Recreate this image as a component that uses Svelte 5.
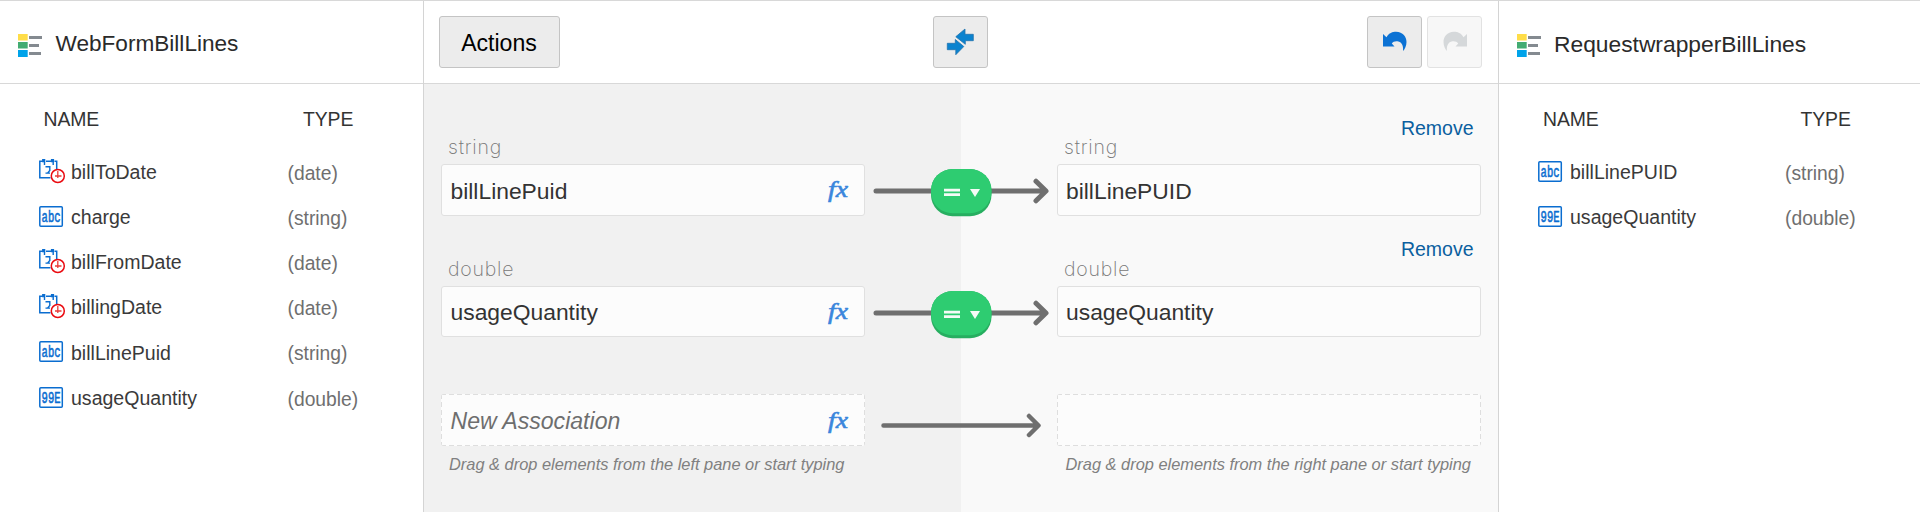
<script>
  const left = {
    title: 'WebFormBillLines',
    rows: [
      ['billToDate', 'date'],
      ['charge', 'string'],
      ['billFromDate', 'date'],
      ['billingDate', 'date'],
      ['billLinePuid', 'string'],
      ['usageQuantity', 'double'],
    ],
  };
  const right = {
    title: 'RequestwrapperBillLines',
    rows: [
      ['billLinePUID', 'string'],
      ['usageQuantity', 'double'],
    ],
  };
  const links = [
    { type: 'string', from: 'billLinePuid', to: 'billLinePUID' },
    { type: 'double', from: 'usageQuantity', to: 'usageQuantity' },
  ];
</script>

{#snippet typeIcon(type)}
  {#if type === 'date'}
    <svg class="ticon" width="27" height="25" viewBox="0 0 27 25">
      <path d="M11.500 18.800H.8V2.200h3M7 2.200h5M15.500 2.200h2.200v8" fill="none" stroke="#0a6dd0" stroke-width="1.500" />
      <path d="M4.700 0v3.200M13.500 0v3.200" stroke="#0a6dd0" stroke-width="3.200" />
      <path d="M5.500 3v3M14.200 3v3" stroke="#0a6dd0" stroke-width="1.400" />
      <path d="M6.500 7.800h4.300v3.600l-2.300 2.700M6.500 14.100h4.500" fill="none" stroke="#0a6dd0" stroke-width="1.400" />
      <circle cx="18.800" cy="17" r="6.500" fill="#fff" stroke="#ea0a10" stroke-width="1.500" />
      <path d="M18.800 12v7M16 17h6.500" stroke="#ea3b38" stroke-width="1.300" />
    </svg>
  {:else}
    <svg class="ticon" width="27" height="25" viewBox="0 0 27 25">
      <rect x=".8" y="2.700" width="22.500" height="19.600" rx="1" fill="#fff" stroke="#0a6dd0" stroke-width="1.500" />
      <text x="2.600" y="18.300" textLength="19" lengthAdjust="spacingAndGlyphs" class="glyphs">{type === 'string' ? 'abc' : '99E'}</text>
    </svg>
  {/if}
{/snippet}

{#snippet panel(data, side)}
  <aside class={side}>
    <header>
      <svg width="25" height="24" viewBox="0 0 25 24">
        <path fill="#ffdd48" d="M0 0h9.700v6.500H0z" />
        <path fill="#43ac72" d="M0 8h9.700v6.500H0z" />
        <path fill="#00a3ea" d="M0 16h9.700v7H0z" />
        <path fill="#848a90" d="M11 2h13v3H11zM11 10h10v3H11zM11 18h12v3H11z" />
      </svg>
      <h2>{data.title}</h2>
    </header>
    <div class="cols"><span>NAME</span><span>TYPE</span></div>
    <ul>
      {#each data.rows as [name, type]}
        <li>
          {@render typeIcon(type)}
          <span class="name">{name}</span>
          <span class="type">({type})</span>
        </li>
      {/each}
    </ul>
  </aside>
{/snippet}

{#snippet fx()}
  <svg width="28" height="26" viewBox="0 0 28 26"><text x="4" y="19" textLength="20" lengthAdjust="spacingAndGlyphs" class="fx">fx</text></svg>
{/snippet}

<div class="app">
  {@render panel(left, 'left')}
  <main>
    <div class="toolbar">
      <button class="actions">Actions</button>
      <button class="sq">
        <svg width="27" height="28" viewBox="0 0 27 28" fill="#0b83cf" stroke="#2273ae" stroke-width=".8">
          <path d="M26.300 6.300v6.400h-8v3.600L8.800 8.700 18 1v5.300z" />
          <path d="M.3 15.300h8V11.500l8.500 7-8 8.200v-5H.3z" />
        </svg>
      </button>
      <div class="pair">
        <button class="sq">
          <svg width="26" height="22" viewBox="0 0 26 22"><path fill="#0c72d4" d="M1 3l3.500 3.200C7 2 10.500 .8 14 .8c7 0 10.500 5.200 10.500 10.200 0 4-1.700 7.200-3.500 9 .5-4-.3-9-5.500-9.800-2.600-.3-4.500 .5-5.700 2.300L12.500 15.500H1z" /></svg>
        </button>
        <button class="sq off">
          <svg width="26" height="22" viewBox="0 0 26 22"><path fill="#d5d8da" transform="matrix(-1 0 0 1 26 0)" d="M1 3l3.500 3.200C7 2 10.500 .8 14 .8c7 0 10.500 5.200 10.500 10.200 0 4-1.700 7.200-3.500 9 .5-4-.3-9-5.500-9.800-2.600-.3-4.500 .5-5.700 2.300L12.500 15.500H1z" /></svg>
        </button>
      </div>
    </div>
    <div class="canvas">
      {#each links as link}
        <section>
          <div class="side">
            <label>{link.type}</label>
            <div class="field">{link.from}{@render fx()}</div>
          </div>
          <div class="link">
            <svg width="191" height="48" viewBox="0 0 191 48">
              <path d="M11 22H180M171 12.200l10 9.800-10 9.800" fill="none" stroke="#6f6f6f" stroke-width="5" stroke-linecap="round" stroke-linejoin="round" />
              <rect x="66" y="0" width="60.500" height="47.200" rx="21.500" fill="#27ae60" />
              <rect x="66" y="0" width="60.500" height="44.200" rx="21.500" fill="#2ecc71" />
              <path fill="#f4fbf6" d="M79 19.800h16v2.800H79zM79 24.300h16v2.800H79zM105 20h10l-5 8z" />
            </svg>
          </div>
          <div class="side">
            <div class="top"><label>{link.type}</label><a href="#remove">Remove</a></div>
            <div class="field">{link.to}</div>
          </div>
        </section>
      {/each}
      <section class="new">
        <div class="side">
          <div class="field dashed"><em>New Association</em>{@render fx()}</div>
          <p>Drag &amp; drop elements from the left pane or start typing</p>
        </div>
        <div class="link">
          <svg width="191" height="48" viewBox="0 0 191 48">
            <path d="M18.500 22.500H172M164 13l9.500 9.500-9.500 9.500" fill="none" stroke="#6f6f6f" stroke-width="4.500" stroke-linecap="round" stroke-linejoin="round" />
          </svg>
        </div>
        <div class="side">
          <div class="field dashed"></div>
          <p class="wide">Drag &amp; drop elements from the right pane or start typing</p>
        </div>
      </section>
    </div>
  </main>
  {@render panel(right, 'right')}
</div>

<style>
  :global(body) { background: #fff; }
  .app {
    display: grid;
    grid-template-columns: 424px 1074px 422px;
    width: 1920px;
    height: 512px;
    overflow: hidden;
    box-sizing: border-box;
    border-top: 1px solid #d8d8d8;
    font-family: "Liberation Sans", Arial, sans-serif;
    color: #333;
  }
  .app * { box-sizing: border-box; }
  svg { display: block; flex: none; overflow: visible; }
  .left { border-right: 1px solid #d4d4d4; }
  .right { border-left: 1px solid #d4d4d4; }
  header {
    display: flex;
    align-items: center;
    height: 83px;
    padding-left: 18px;
    border-bottom: 1px solid #d8d8d8;
  }
  header svg { position: relative; top: 4px; }
  h2 {
    margin: 4px 0 0 12.500px;
    font-size: 22.600px;
    font-weight: 400;
    line-height: 30px;
    color: #2a2a2a;
  }
  .right h2 { margin-left: 12px; font-size: 22.800px; }
  .cols {
    display: flex;
    height: 65px;
    padding: 22px 0 0 43.500px;
    font-size: 19.400px;
    line-height: 26px;
    letter-spacing: -.1px;
  }
  .right .cols { padding-left: 44px; }
  .cols span { width: 259.500px; }
  .right .cols span { width: 257.500px; }
  .cols span:last-child { width: auto; }
  ul { margin: 0; padding: 0 0 0 39px; list-style: none; }
  li { display: flex; height: 45.200px; align-items: center; }
  .ticon { position: relative; top: -.5px; }
  .name { width: 216.500px; margin: .5px 0 0 5px; font-size: 19.550px; line-height: 26px; color: #3a3a3a; }
  .right .name { width: 215px; }
  .type { margin-top: 4px; font-size: 19.300px; line-height: 26px; color: #6f6f6f; }
  .glyphs { font: 400 16px "Liberation Mono", monospace; fill: #0a6dd0; stroke: #0a6dd0; stroke-width: .6px; }
  .fx { font: italic 400 24px "Liberation Serif", serif; fill: #3b86dc; stroke: #3b86dc; stroke-width: .6px; }

  main { display: flex; flex-direction: column; }
  .toolbar {
    display: grid;
    grid-template-columns: 1fr auto 1fr;
    align-items: center;
    height: 83px;
    padding: 0 16px 0 15px;
    border-bottom: 1px solid #d8d8d8;
  }
  button {
    display: flex;
    align-items: center;
    justify-content: center;
    height: 52px;
    padding: 0;
    border: 1px solid #c4c4c4;
    border-radius: 3px;
    background: #ececec;
    font-family: inherit;
    color: #000;
  }
  .actions { width: 121px; font-size: 23.100px; padding: 2px 1px 0 0; }
  .sq { width: 55px; }
  .off { border-color: #e2e2e2; background: #f7f7f7; }
  .pair { display: flex; gap: 5px; justify-content: flex-end; }
  .canvas {
    flex: 1;
    padding: 33px 0 0 17px;
    background: linear-gradient(90deg, #f1f1f1 537px, #f9f9f9 537px);
  }
  section { display: grid; grid-template-columns: 424px 191.500px 424.500px; height: 121.500px; }
  label {
    display: block;
    height: 47px;
    padding: 17px 0 0 7px;
    font-family: Inter, sans-serif;
    font-size: 19.500px;
    font-weight: 200;
    line-height: 26px;
    letter-spacing: .8px;
    color: #777;
  }
  .top { display: flex; justify-content: space-between; height: 47px; }
  .top label { padding-left: 7.500px; }
  a { margin: -2.500px 7.500px 0 0; font-size: 19.500px; line-height: 26px; color: #0b5f9f; text-decoration: none; }
  .field {
    display: flex;
    align-items: center;
    justify-content: space-between;
    height: 51.500px;
    padding: 3px 12px 0 8.500px;
    border: 1px solid #e0e0e0;
    border-radius: 3px;
    background: #fcfcfc;
    font-size: 22.850px;
    white-space: nowrap;
  }
  .link { padding-top: 52px; }
  .new .link { padding-top: 9px; }
  .dashed {
    --h: repeating-linear-gradient(90deg, #dedede 0 5px, transparent 5px 8px);
    --v: repeating-linear-gradient(180deg, #dedede 0 5px, transparent 5px 8px);
    padding: 5px 13px 1px 9.500px;
    border: 0;
    background:
      var(--h) 0 0 / 100% 1px no-repeat,
      var(--h) 0 100% / 100% 1px no-repeat,
      var(--v) 0 0 / 1px 100% no-repeat,
      var(--v) 100% 0 / 1px 100% no-repeat,
      #fcfcfc;
  }
  .new { padding-top: 34px; height: 140px; }
  em { color: #6e6e6e; font-size: 23.100px; }
  p { margin: 6px 0 0 8px; font-size: 16.400px; line-height: 24px; font-style: italic; color: #808080; white-space: nowrap; }
  .wide { margin-left: 9px; }
</style>
